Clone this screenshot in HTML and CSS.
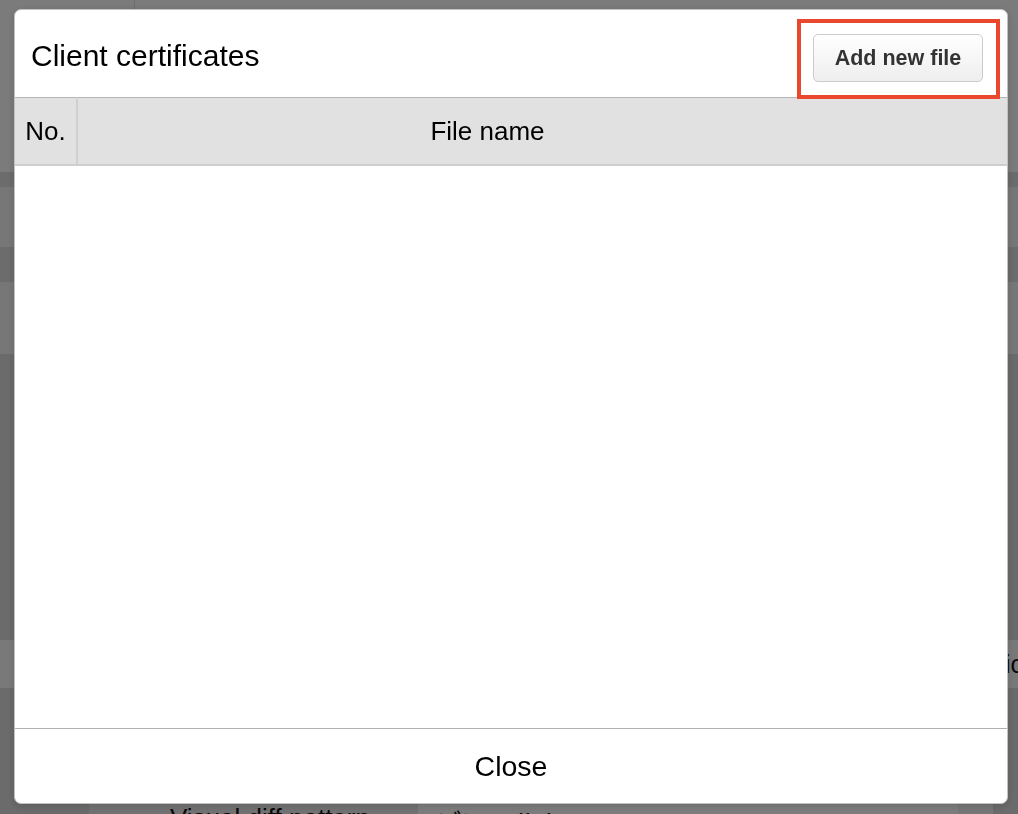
FILE: index.html
```html
<!DOCTYPE html>
<html lang="en">
<head>
    <meta charset="UTF-8">
    <meta name="viewport" content="width=device-width, initial-scale=1.0">
    <title>Client certificates</title>
    <link rel="stylesheet" href="styles.css">
</head>
<body>
    <div class="page">
        <div class="page-top">
            <div class="side"></div>
            <div class="top-main"></div>
        </div>
        <div class="band band-a"></div>
        <div class="band band-b"></div>
        <div class="band band-c"></div>
        <div class="band band-d"></div>
        <div class="band band-e"></div>
        <div class="band band-f"><span class="peek">icon</span></div>
        <div class="band band-g"></div>
        <div class="form-row">
            <div class="cell cell-gap"></div>
            <div class="cell cell-label">Visual diff pattern</div>
            <div class="cell cell-value">デフォルト</div>
            <div class="cell cell-end"></div>
        </div>
    </div>

    <div class="overlay">
        <div class="dialog">
            <div class="dialog-header">
                <h2 class="dialog-title">Client certificates</h2>
                <div class="add-wrap">
                    <button class="add-button">Add new file</button>
                    <div class="highlight"></div>
                </div>
            </div>
            <div class="table-wrap">
                <table class="cert-table">
                    <thead>
                        <tr>
                            <th class="col-no">No.</th>
                            <th class="col-name">File name</th>
                        </tr>
                    </thead>
                    <tbody></tbody>
                </table>
            </div>
            <div class="dialog-footer">
                <button class="close-button">Close</button>
            </div>
        </div>
    </div>
</body>
</html>
```

FILE: styles.css
```css
body {
    margin: 0;
    height: 814px;
    overflow: hidden;
    font-family: "Liberation Sans", Arial, "Noto Sans CJK JP", sans-serif;
    background-color: #d6d6d6;
    color: #111;
}

/* page underneath the modal */
.page {
    display: flex;
    flex-direction: column;
    height: 814px;
    overflow: hidden;
}
.page-top {
    height: 172px;
    flex-shrink: 0;
    display: flex;
    background-color: #f6f6f6;
}
.side {
    width: 134px;
    border-right: 1px solid #dadada;
}
.top-main {
    flex: 1;
}
.band {
    flex-shrink: 0;
}
.band-a { height: 15px; background-color: #d8d8d8; }
.band-b { height: 60px; background-color: #eeeeee; }
.band-c { height: 35px; background-color: #d8d8d8; }
.band-d { height: 72px; background-color: #eeeeee; }
.band-e { height: 286px; background-color: #d6d6d6; }
.band-f {
    height: 48px;
    background-color: #f2f2f2;
    display: flex;
    align-items: center;
    overflow: hidden;
}
.peek {
    margin-left: 1005px;
    font-size: 25px;
    white-space: nowrap;
}
.band-g { height: 110px; background-color: #d6d6d6; }
.form-row {
    height: 16px;
    display: flex;
    flex-shrink: 0;
    overflow: hidden;
    font-size: 26px;
}
.cell {
    padding-top: 5px;
    white-space: nowrap;
}
.cell-gap { width: 89px; background-color: #d6d6d6; }
.cell-label {
    width: 248px;
    padding-left: 81px;
    background-color: #e4e4e4;
}
.cell-value {
    width: 523px;
    padding-left: 17px;
    background-color: #fafafa;
}
.cell-end { width: 35px; background-color: #eeeeee; }

/* modal */
.overlay {
    position: fixed;
    inset: 0;
    background-color: rgba(0, 0, 0, 0.5);
    display: flex;
    padding: 9px 10px 10px 14px;
}
.dialog {
    flex: 1;
    display: flex;
    flex-direction: column;
    background-color: white;
    border: 1px solid #c2c2c2;
    border-radius: 7px;
    overflow: hidden;
    box-shadow: 0 2px 8px rgba(0, 0, 0, 0.15);
}
.dialog-header {
    display: flex;
    justify-content: space-between;
    align-items: center;
    padding: 24px 24px 15px 16px;
}
.dialog-title {
    margin: -4px 0 0 0;
    font-size: 30px;
    font-weight: normal;
    color: #000;
}
.add-wrap {
    position: relative;
}
.add-button {
    display: block;
    width: 170px;
    height: 48px;
    font-family: inherit;
    font-size: 21.5px;
    font-weight: bold;
    color: #333;
    background: linear-gradient(#ffffff, #eeeeee);
    border: 1px solid #cccccc;
    border-radius: 5px;
}
.highlight {
    position: absolute;
    top: -15px;
    left: -16px;
    right: -17px;
    bottom: -17px;
    border: 4px solid #e9472e;
}
.table-wrap {
    flex: 1;
}
.cert-table {
    width: 100%;
    border-collapse: collapse;
}
.cert-table th {
    height: 66px;
    padding: 0;
    background-color: #e1e1e1;
    border-top: 1px solid #b4b4b4;
    border-bottom: 2px solid #cecece;
    font-size: 26px;
    font-weight: normal;
    color: #000;
    text-align: center;
}
.col-no {
    width: 61px;
    border-right: 2px solid #d0d0d0;
}
.cert-table .col-name {
    padding-right: 110px;
}
.dialog-footer {
    height: 74px;
    border-top: 1px solid #b0b0b0;
    display: flex;
    justify-content: center;
    align-items: center;
}
.close-button {
    font-family: inherit;
    font-size: 28.5px;
    color: #000;
    background: none;
    border: none;
    padding: 0 10px;
    cursor: pointer;
}
```
